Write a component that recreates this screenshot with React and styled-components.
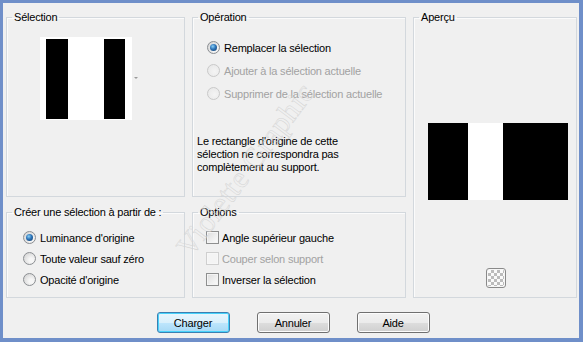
import React from "react";
import styled, { createGlobalStyle } from "styled-components";

const GlobalStyle = createGlobalStyle`
  html, body {
    margin: 0;
    padding: 0;
    background: #f0f0f0;
  }
  body {
    font-family: "Liberation Sans", Arial, sans-serif;
    font-size: 11px;
    letter-spacing: -0.2px;
    color: #000;
  }
`;

const Frame = styled.div`
  position: relative;
  width: 583px;
  height: 342px;
  box-sizing: border-box;
  border-style: solid;
  border-color: #6f8fc9;
  border-width: 3px 4px 4px 3px;
  background: #f0f0f0;
  overflow: hidden;
`;

const Panels = styled.div`
  display: grid;
  grid-template-columns: 179px 214px 164px;
  grid-template-rows: 187px 93px;
  grid-template-areas:
    "sel op prev"
    "make opt prev";
  column-gap: 7px;
  row-gap: 8px;
  padding: 7px 0 0 3px;
`;

const Group = styled.fieldset`
  grid-area: ${(p) => p.$area};
  margin: 0;
  padding: 0;
  min-width: 0;
  box-sizing: border-box;
  border: 1px solid #d3d8dd;
  box-shadow: inset 1px 1px 0 #fbfbfb;
`;

const Legend = styled.legend`
  margin-left: 5px;
  padding: 0 2px;
  line-height: 14px;
  height: 14px;
  white-space: nowrap;
`;

const Body = styled.div`
  display: flex;
  flex-direction: column;
  align-items: flex-start;
  padding: ${(p) => p.$pad};
`;

const Thumb = styled.div`
  display: flex;
  align-items: flex-start;
  gap: 2px;
`;

const Stripes = styled.div`
  display: grid;
  grid-template-columns: ${(p) => p.$cols};
  width: ${(p) => p.$w}px;
  height: ${(p) => p.$h}px;
  background: #fff;
  padding: ${(p) => p.$pad || "0"};
  box-sizing: border-box;
`;

const Bar = styled.div`
  background: ${(p) => (p.$white ? "#fff" : "#000")};
`;

const DropArrow = styled.span`
  margin-top: 40px;
  width: 0;
  height: 0;
  border-left: 2px solid transparent;
  border-right: 2px solid transparent;
  border-top: 2px solid #9a9a9a;
`;

const OptionList = styled.div`
  display: flex;
  flex-direction: column;
`;

const Row = styled.label`
  display: flex;
  align-items: center;
  gap: ${(p) => p.$gap}px;
  height: ${(p) => p.$h}px;
  color: ${(p) => (p.$disabled ? "#a2a2a2" : "#000")};
  white-space: nowrap;
`;

const Radio = styled.span`
  position: relative;
  width: 11px;
  height: 11px;
  flex: none;
  border-radius: 50%;
  border: 1px solid ${(p) => (p.$disabled ? "#c9c9c9" : "#8b8e92")};
  background: ${(p) =>
    p.$disabled
      ? "radial-gradient(circle at 60% 60%, #f4f4f4, #e6e6e6)"
      : "radial-gradient(circle at 65% 65%, #f6f6f6 20%, #d7d7d7 80%)"};
  &::after {
    content: "";
    display: ${(p) => (p.$checked ? "block" : "none")};
    position: absolute;
    left: 2px;
    top: 2px;
    width: 7px;
    height: 7px;
    border-radius: 50%;
    background: radial-gradient(circle at 40% 35%, #8ad0f5 0%, #2c73b8 45%, #11375f 100%);
  }
`;

const Check = styled.span`
  width: 11px;
  height: 11px;
  flex: none;
  border: 1px solid ${(p) => (p.$disabled ? "#cfcfcf" : "#8e8f8f")};
  background: ${(p) =>
    p.$disabled
      ? "#f4f4f4"
      : "linear-gradient(135deg, #dcdcdc 0%, #f3f3f3 70%, #fafafa 100%)"};
  box-shadow: inset 0 0 0 1px ${(p) => (p.$disabled ? "#f7f7f7" : "#f4f4f4")};
`;

const Note = styled.p`
  margin: 30px 0 0 -10px;
  line-height: 13px;
`;

const Transparency = styled.span`
  margin: 68px 0 0 58px;
  width: 18px;
  height: 18px;
  border: 1px solid #8a8a8a;
  border-radius: 3px;
  box-shadow: inset 0 0 0 1px #f6f6f6;
  background-color: #fff;
  background-image: repeating-conic-gradient(#bcbcbc 0 25%, #fafafa 0 50%);
  background-size: 6px 6px;
  background-position: 1px 1px;
`;

const Buttons = styled.div`
  display: flex;
  justify-content: center;
  gap: 27px;
  padding: 14px 0 0 4px;
`;

const Button = styled.button`
  width: 73px;
  height: 21px;
  padding: 0;
  font: inherit;
  letter-spacing: inherit;
  color: #000;
  border-radius: 3px;
  border: 1px solid ${(p) => (p.$default ? "#3c7fb1" : "#707070")};
  background: ${(p) =>
    p.$default
      ? "linear-gradient(#eaf6fd 0%, #d9f0fc 50%, #bee6fd 51%, #a7d9f5 100%)"
      : "linear-gradient(#f2f2f2 0%, #ebebeb 50%, #dddddd 51%, #cfcfcf 100%)"};
  box-shadow: inset 0 0 0 1px ${(p) => (p.$default ? "#48d2fb" : "#fcfcfc")};
`;

const Watermark = styled.span`
  position: absolute;
  left: 180px;
  top: 232px;
  font-family: "Liberation Serif", serif;
  font-size: 30px;
  letter-spacing: 0.5px;
  color: transparent;
  -webkit-text-stroke: 0.5px #d4d4d4;
  transform: rotate(-53deg);
  transform-origin: left center;
  white-space: nowrap;
  pointer-events: none;
`;

const Choice = ({ kind, checked, disabled, children }) => (
  <Row
    $disabled={disabled}
    $gap={kind === "check" ? 3 : 4}
    $h={kind === "op" ? 23 : 21}
  >
    {kind === "check" ? (
      <Check $disabled={disabled} />
    ) : (
      <Radio $checked={checked} $disabled={disabled} />
    )}
    {children}
  </Row>
);

export default function App() {
  return (
    <>
      <GlobalStyle />
      <Frame>
        <Panels>
          <Group $area="sel">
            <Legend>Sélection</Legend>
            <Body $pad="13px 0 0 33px">
              <Thumb>
                <Stripes $w={92} $h={83} $cols="22px 36px 21px" $pad="2px 6px 1px 6px">
                  <Bar />
                  <Bar $white />
                  <Bar />
                </Stripes>
                <DropArrow />
              </Thumb>
            </Body>
          </Group>

          <Group $area="op">
            <Legend>Opération</Legend>
            <Body $pad="12px 0 0 14px">
              <OptionList>
                <Choice kind="op" checked>Remplacer la sélection</Choice>
                <Choice kind="op" disabled>Ajouter à la sélection actuelle</Choice>
                <Choice kind="op" disabled>Supprimer de la sélection actuelle</Choice>
              </OptionList>
              <Note>
                Le rectangle d'origine de cette
                <br />
                sélection ne correspondra pas
                <br />
                complètement au support.
              </Note>
            </Body>
          </Group>

          <Group $area="prev">
            <Legend>Aperçu</Legend>
            <Body $pad="99px 0 0 14px">
              <Stripes $w={140} $h={77} $cols="40px 35px 65px">
                <Bar />
                <Bar $white />
                <Bar />
              </Stripes>
              <Transparency />
            </Body>
          </Group>

          <Group $area="make">
            <Legend>Créer une sélection à partir de :</Legend>
            <Body $pad="8px 0 0 16px">
              <OptionList>
                <Choice kind="radio" checked>Luminance d'origine</Choice>
                <Choice kind="radio">Toute valeur sauf zéro</Choice>
                <Choice kind="radio">Opacité d'origine</Choice>
              </OptionList>
            </Body>
          </Group>

          <Group $area="opt">
            <Legend>Options</Legend>
            <Body $pad="8px 0 0 13px">
              <OptionList>
                <Choice kind="check">Angle supérieur gauche</Choice>
                <Choice kind="check" disabled>Couper selon support</Choice>
                <Choice kind="check">Inverser la sélection</Choice>
              </OptionList>
            </Body>
          </Group>
        </Panels>

        <Buttons>
          <Button $default>Charger</Button>
          <Button>Annuler</Button>
          <Button>Aide</Button>
        </Buttons>

        <Watermark>Violette Graphic</Watermark>
      </Frame>
    </>
  );
}
